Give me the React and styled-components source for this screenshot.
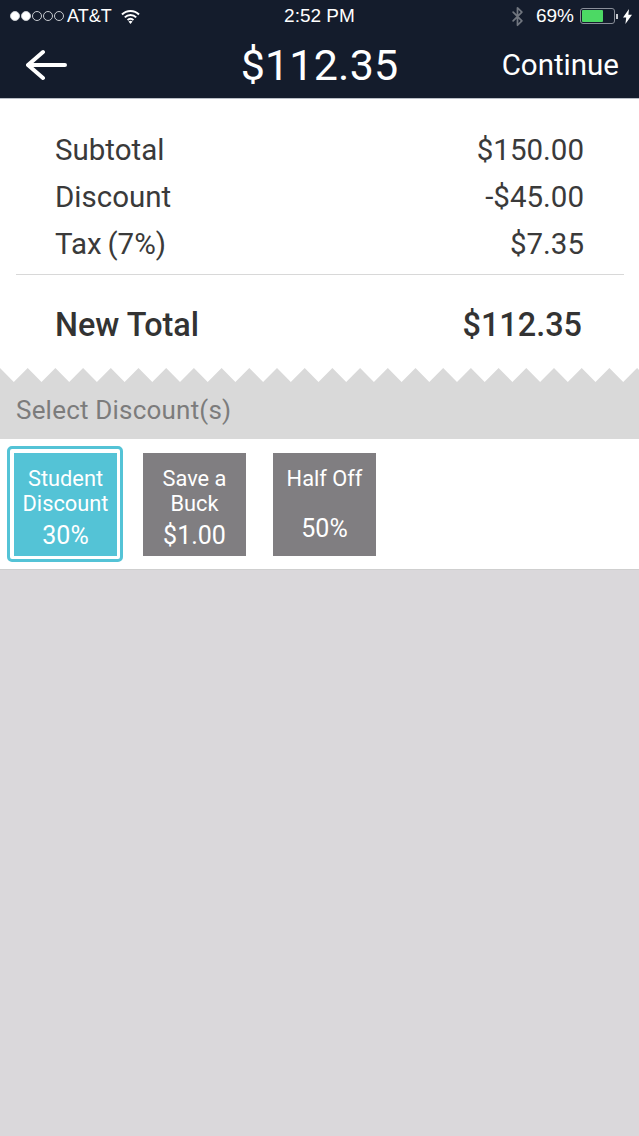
import React from "react";
import styled, { createGlobalStyle } from "styled-components";
import { Bluetooth } from "lucide-react";

const GlobalStyle = createGlobalStyle`
  html, body {
    margin: 0;
    padding: 0;
    background: #dad8db;
  }
  * {
    box-sizing: border-box;
  }
`;

const Page = styled.div`
  width: 639px;
  height: 1136px;
  overflow: hidden;
  background: #dad8db;
  font-family: Roboto, "Liberation Sans", sans-serif;
  color: #333;
`;

const Header = styled.header`
  height: 99px;
  background: #141c2c;
  border-bottom: 1px solid #b9bec6;
  color: #fff;
`;

const StatusBar = styled.div`
  height: 31px;
  padding: 1px 7px 0 10px;
  display: grid;
  grid-template-columns: 1fr auto 1fr;
  align-items: center;
  font-family: "Liberation Sans", Arial, sans-serif;
  font-size: 18px;
`;

const StatusGroup = styled.div`
  display: flex;
  align-items: center;
  justify-content: ${(props) => (props.$right ? "flex-end" : "flex-start")};
`;

const Clock = styled.div`
  font-size: 19px;
  margin-right: 3px;
`;

const Dot = styled.span`
  width: 10px;
  height: 10px;
  margin-right: 1px;
  border-radius: 50%;
  border: 1px solid #c9ccd1;
  background: ${(props) => (props.$on ? "#fff" : "transparent")};
`;

const Carrier = styled.span`
  margin-left: 2px;
  margin-right: 9px;
`;

const Battery = styled.div`
  width: 35px;
  height: 16px;
  margin-left: 6px;
  padding: 1px;
  border: 1px solid #8a8f99;
  border-radius: 3px;
`;

const BatteryFill = styled.div`
  height: 100%;
  border-radius: 1px;
  background: #4cd964;
`;

const BatteryTip = styled.div`
  width: 2px;
  height: 5px;
  margin-left: 1px;
  margin-right: 5px;
  background: #c8cad0;
`;

const BatteryText = styled.span`
  margin-left: 8px;
  font-size: 19px;
`;

const NavBar = styled.div`
  height: 67px;
  padding: 0 20px;
  display: grid;
  grid-template-columns: 1fr auto 1fr;
  align-items: center;
`;

const BackArrow = styled.svg`
  display: block;
  width: 42px;
  height: 32px;
  margin-left: 6px;
`;

const Title = styled.div`
  font-size: 43px;
  letter-spacing: 0.2px;
  margin-top: 1px;
`;

const Continue = styled.div`
  justify-self: end;
  font-size: 29.5px;
`;

const Receipt = styled.section`
  background: #fff;
  padding: 27px 15px 0 16px;
  height: 269px;
`;

const Rows = styled.div`
  padding: 0 40px 7px 39px;
  border-bottom: 1px solid #d8d8d8;
`;

const Row = styled.div`
  height: 47px;
  display: flex;
  align-items: center;
  justify-content: space-between;
  font-size: 29.5px;
  word-spacing: -1.5px;
  color: #3a3a3a;
`;

const TotalRow = styled.div`
  margin-top: 26px;
  padding: 0 42px 0 39px;
  height: 47px;
  display: flex;
  align-items: center;
  justify-content: space-between;
  font-size: 32.4px;
  font-weight: 500;
  color: #333;
`;

const Teeth = styled.svg`
  display: block;
  width: 639px;
  height: 14px;
  background: #fff;
`;

const Section = styled.div`
  background: #d9d9d9;
  height: 57px;
`;

const SectionLabel = styled.div`
  padding: 13px 0 0 16px;
  font-size: 26px;
  line-height: 30px;
  letter-spacing: 0.2px;
  color: #7c7c7c;
`;

const Strip = styled.div`
  height: 131px;
  background: #fff;
  border-bottom: 1px solid #cfcfcf;
  display: flex;
  align-items: center;
  padding: 0 0 0 7px;
`;

const Option = styled.div`
  width: 116px;
  height: 116px;
  margin-right: 14px;
  display: flex;
  align-items: center;
  padding-left: ${(props) => (props.$selected ? "4px" : "3px")};
  border-radius: 5px;
  border: 3px solid ${(props) => (props.$selected ? "#54c3d6" : "transparent")};
`;

const OptionFace = styled.div`
  width: 103px;
  height: 103px;
  background: ${(props) => (props.$selected ? "#54c3d6" : "#807e81")};
  color: #fff;
  display: flex;
  flex-direction: column;
  align-items: center;
  justify-content: space-between;
  padding: 13px 0 ${(props) => (props.$single ? "12px" : "5px")};
  text-align: center;
`;

const OptionName = styled.div`
  font-size: 21.8px;
  line-height: 25.5px;
`;

const OptionValue = styled.div`
  font-size: 25px;
  line-height: 30px;
`;

const WifiIcon = () => (
  <svg width="19" height="15" viewBox="0 0 19 15">
    <path
      d="M1 5.5a12 12 0 0 1 17 0M3.8 8.4a8 8 0 0 1 11.4 0M6.6 11.1a4 4 0 0 1 5.8 0"
      fill="none"
      stroke="#fff"
      strokeWidth="2"
    />
    <path d="M9.5 15l-2-2.4a3 3 0 0 1 4 0z" fill="#fff" />
  </svg>
);

const BoltIcon = () => (
  <svg width="9" height="15" viewBox="0 0 9 15">
    <path d="M6 0L0 8.5h3.2L2.4 15 9 5.8H5.4z" fill="#fff" />
  </svg>
);

const teethPoints = () => {
  // gray teeth on the white card: a peak every 27.7px
  const pts = ["0,14", "0,0"];
  for (let i = 0; i < 24; i++) {
    pts.push(`${13.8 + i * 27.7},14`, `${27.7 + i * 27.7},0`);
  }
  pts.push("680,14");
  return pts.join(" ");
};

const options = [
  { name: ["Student", "Discount"], value: "30%", selected: true },
  { name: ["Save a", "Buck"], value: "$1.00" },
  { name: ["Half Off"], value: "50%" },
];

const App = () => (
  <Page>
    <GlobalStyle />
    <Header>
      <StatusBar>
        <StatusGroup>
          <Dot $on />
          <Dot $on />
          <Dot />
          <Dot />
          <Dot />
          <Carrier>AT&amp;T</Carrier>
          <WifiIcon />
        </StatusGroup>
        <Clock>2:52 PM</Clock>
        <StatusGroup $right>
          <Bluetooth size={21} color="#71767f" strokeWidth={2} />
          <BatteryText>69%</BatteryText>
          <Battery>
            <BatteryFill style={{ width: "69%" }} />
          </Battery>
          <BatteryTip />
          <BoltIcon />
        </StatusGroup>
      </StatusBar>
      <NavBar>
        <BackArrow viewBox="0 0 42 32">
          <path
            d="M2 16H39M17 3L2 16L17 29"
            fill="none"
            stroke="#fff"
            strokeWidth="4"
            strokeLinecap="round"
            strokeLinejoin="round"
          />
        </BackArrow>
        <Title>$112.35</Title>
        <Continue>Continue</Continue>
      </NavBar>
    </Header>
    <Receipt>
      <Rows>
        <Row>
          <span>Subtotal</span>
          <span>$150.00</span>
        </Row>
        <Row>
          <span>Discount</span>
          <span>-$45.00</span>
        </Row>
        <Row>
          <span>Tax (7%)</span>
          <span>$7.35</span>
        </Row>
      </Rows>
      <TotalRow>
        <span>New Total</span>
        <span>$112.35</span>
      </TotalRow>
    </Receipt>
    <Teeth viewBox="0 0 639 14">
      <polygon points={teethPoints()} fill="#d9d9d9" />
    </Teeth>
    <Section>
      <SectionLabel>Select Discount(s)</SectionLabel>
    </Section>
    <Strip>
      {options.map((option) => (
        <Option key={option.value} $selected={option.selected}>
          <OptionFace
            $selected={option.selected}
            $single={option.name.length === 1}
          >
            <OptionName>
              {option.name.map((line) => (
                <div key={line}>{line}</div>
              ))}
            </OptionName>
            <OptionValue>{option.value}</OptionValue>
          </OptionFace>
        </Option>
      ))}
    </Strip>
  </Page>
);

export default App;
